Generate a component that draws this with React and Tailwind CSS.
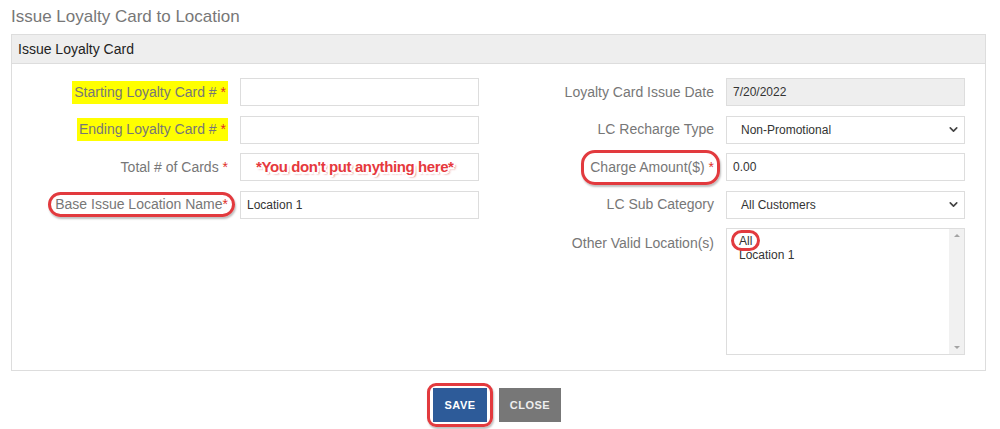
import { ChevronDown } from "lucide-react"

function Req() {
    return <span className="text-[#e0302a]"> *</span>
}

function Label({ children, highlight, ring }) {
    return (
        <div className="w-[216px] shrink-0 text-right text-[14px] text-[#777]">
            <span className={"relative inline-block py-[1px] " + (highlight ? "bg-[#ffff00] pl-[2px] pr-[2px]" : "")}>
                {children}
                {ring && <span className="absolute -inset-x-[7px] -inset-y-[1px] rounded-full border-[3px] border-[#e23a3e] shadow-[1px_2px_2px_rgba(0,0,0,0.25)]" />}
            </span>
        </div>
    )
}

function Input({ value, disabled, children }) {
    return (
        <div className={"relative h-[28px] w-[239px] border border-[#ddd] flex items-center px-[6px] text-[12px] text-[#333] " + (disabled ? "bg-[#eee]" : "bg-white")}>
            {value}
            {children}
        </div>
    )
}

function Select({ value }) {
    return (
        <div className="h-[28px] w-[239px] border border-[#ddd] bg-white flex items-center justify-between pl-[14px] pr-[4px] text-[12px] text-[#333]">
            <span>{value}</span>
            <ChevronDown size={13} strokeWidth={3} className="text-[#444]" />
        </div>
    )
}

function Row({ children }) {
    return <div className="flex items-center gap-[12px]">{children}</div>
}

export default function App() {
    return (
        <div className="min-h-screen bg-white font-['Liberation_Sans',Arial,sans-serif]">
            <h1 className="pl-[11px] pt-[4px] h-[34px] text-[17px] text-[#777]">Issue Loyalty Card to Location</h1>

            <div className="mx-[11px] w-[975px] border border-[#ddd]">
                <div className="h-[29px] bg-[#eee] border-b border-[#ddd] flex items-center px-[6px] text-[14px] text-[#222]">
                    Issue Loyalty Card
                </div>
                <div className="flex pt-[14px] pb-[15px]">
                    <div className="w-[486px] flex flex-col gap-[9.5px]">
                        <Row>
                            <Label highlight>Starting Loyalty Card #<Req /></Label>
                            <Input />
                        </Row>
                        <Row>
                            <Label highlight>Ending Loyalty Card #<Req /></Label>
                            <Input />
                        </Row>
                        <Row>
                            <Label>Total # of Cards<Req /></Label>
                            <Input>
                                <span className="ml-[9px] text-[15px] font-bold tracking-[-0.4px] text-[#e6393d] [text-shadow:2px_0_0_#fff,-2px_0_0_#fff,0_2px_0_#fff,0_-2px_0_#fff,1.5px_1.5px_0_#fff,-1.5px_-1.5px_0_#fff,1.5px_-1.5px_0_#fff,-1.5px_1.5px_0_#fff,2px_2px_2px_rgba(200,40,40,0.8)]">
                                    *You don't put anything here*
                                </span>
                            </Input>
                        </Row>
                        <Row>
                            <Label ring>Base Issue Location Name<span className="text-[#e0302a]">*</span></Label>
                            <Input value="Location 1" />
                        </Row>
                    </div>
                    <div className="w-[486px] flex flex-col gap-[9.5px]">
                        <Row>
                            <Label>Loyalty Card Issue Date</Label>
                            <Input value="7/20/2022" disabled />
                        </Row>
                        <Row>
                            <Label>LC Recharge Type</Label>
                            <Select value="Non-Promotional" />
                        </Row>
                        <Row>
                            <div className="w-[216px] shrink-0 text-right text-[14px] text-[#777]">
                                <span className="relative inline-block py-[1px]">
                                    Charge Amount($)<Req />
                                    <span className="absolute -left-[9px] -right-[6px] -top-[6px] -bottom-[6px] rounded-[14px] border-[3px] border-[#e23a3e] shadow-[1px_2px_2px_rgba(0,0,0,0.25)]" />
                                </span>
                            </div>
                            <Input value="0.00" />
                        </Row>
                        <Row>
                            <Label>LC Sub Category</Label>
                            <Select value="All Customers" />
                        </Row>
                        <div className="flex items-start gap-[12px]">
                            <div className="w-[216px] shrink-0 text-right text-[14px] text-[#777] pt-[5px]">Other Valid Location(s)</div>
                            <div className="h-[127px] w-[239px] border border-[#ddd] bg-white flex">
                                <div className="flex-1 pl-[12px] pt-[5px] text-[12px] leading-[14px] text-[#333]">
                                    <div>
                                        <span className="relative">
                                            All
                                            <span className="absolute -left-[8px] -right-[8px] -top-[4px] -bottom-[3px] rounded-full border-[3px] border-[#e23a3e]" />
                                        </span>
                                    </div>
                                    <div>Location 1</div>
                                </div>
                                <div className="w-[15px] bg-[#f1f1f1] flex flex-col justify-between items-center py-[5px]">
                                    <span className="w-0 h-0 border-x-[3px] border-x-transparent border-b-[3px] border-b-[#a3a3a3]" />
                                    <span className="w-0 h-0 border-x-[3px] border-x-transparent border-t-[3px] border-t-[#a3a3a3]" />
                                </div>
                            </div>
                        </div>
                    </div>
                </div>
            </div>

            <div className="flex justify-center items-center gap-[6px] pt-[12px] pr-[12px]">
                <div className="rounded-[9px] border-[3px] border-[#e23a3e] px-[3px] py-[2px] shadow-[1px_2px_2px_rgba(0,0,0,0.25)]">
                    <button className="h-[34px] w-[54px] bg-[#2d5b99] text-white text-[11px] font-bold tracking-[0.5px]">SAVE</button>
                </div>
                <button className="h-[34px] w-[62px] bg-[#777] text-[#eee] text-[11px] font-bold tracking-[0.5px]">CLOSE</button>
            </div>
        </div>
    )
}
